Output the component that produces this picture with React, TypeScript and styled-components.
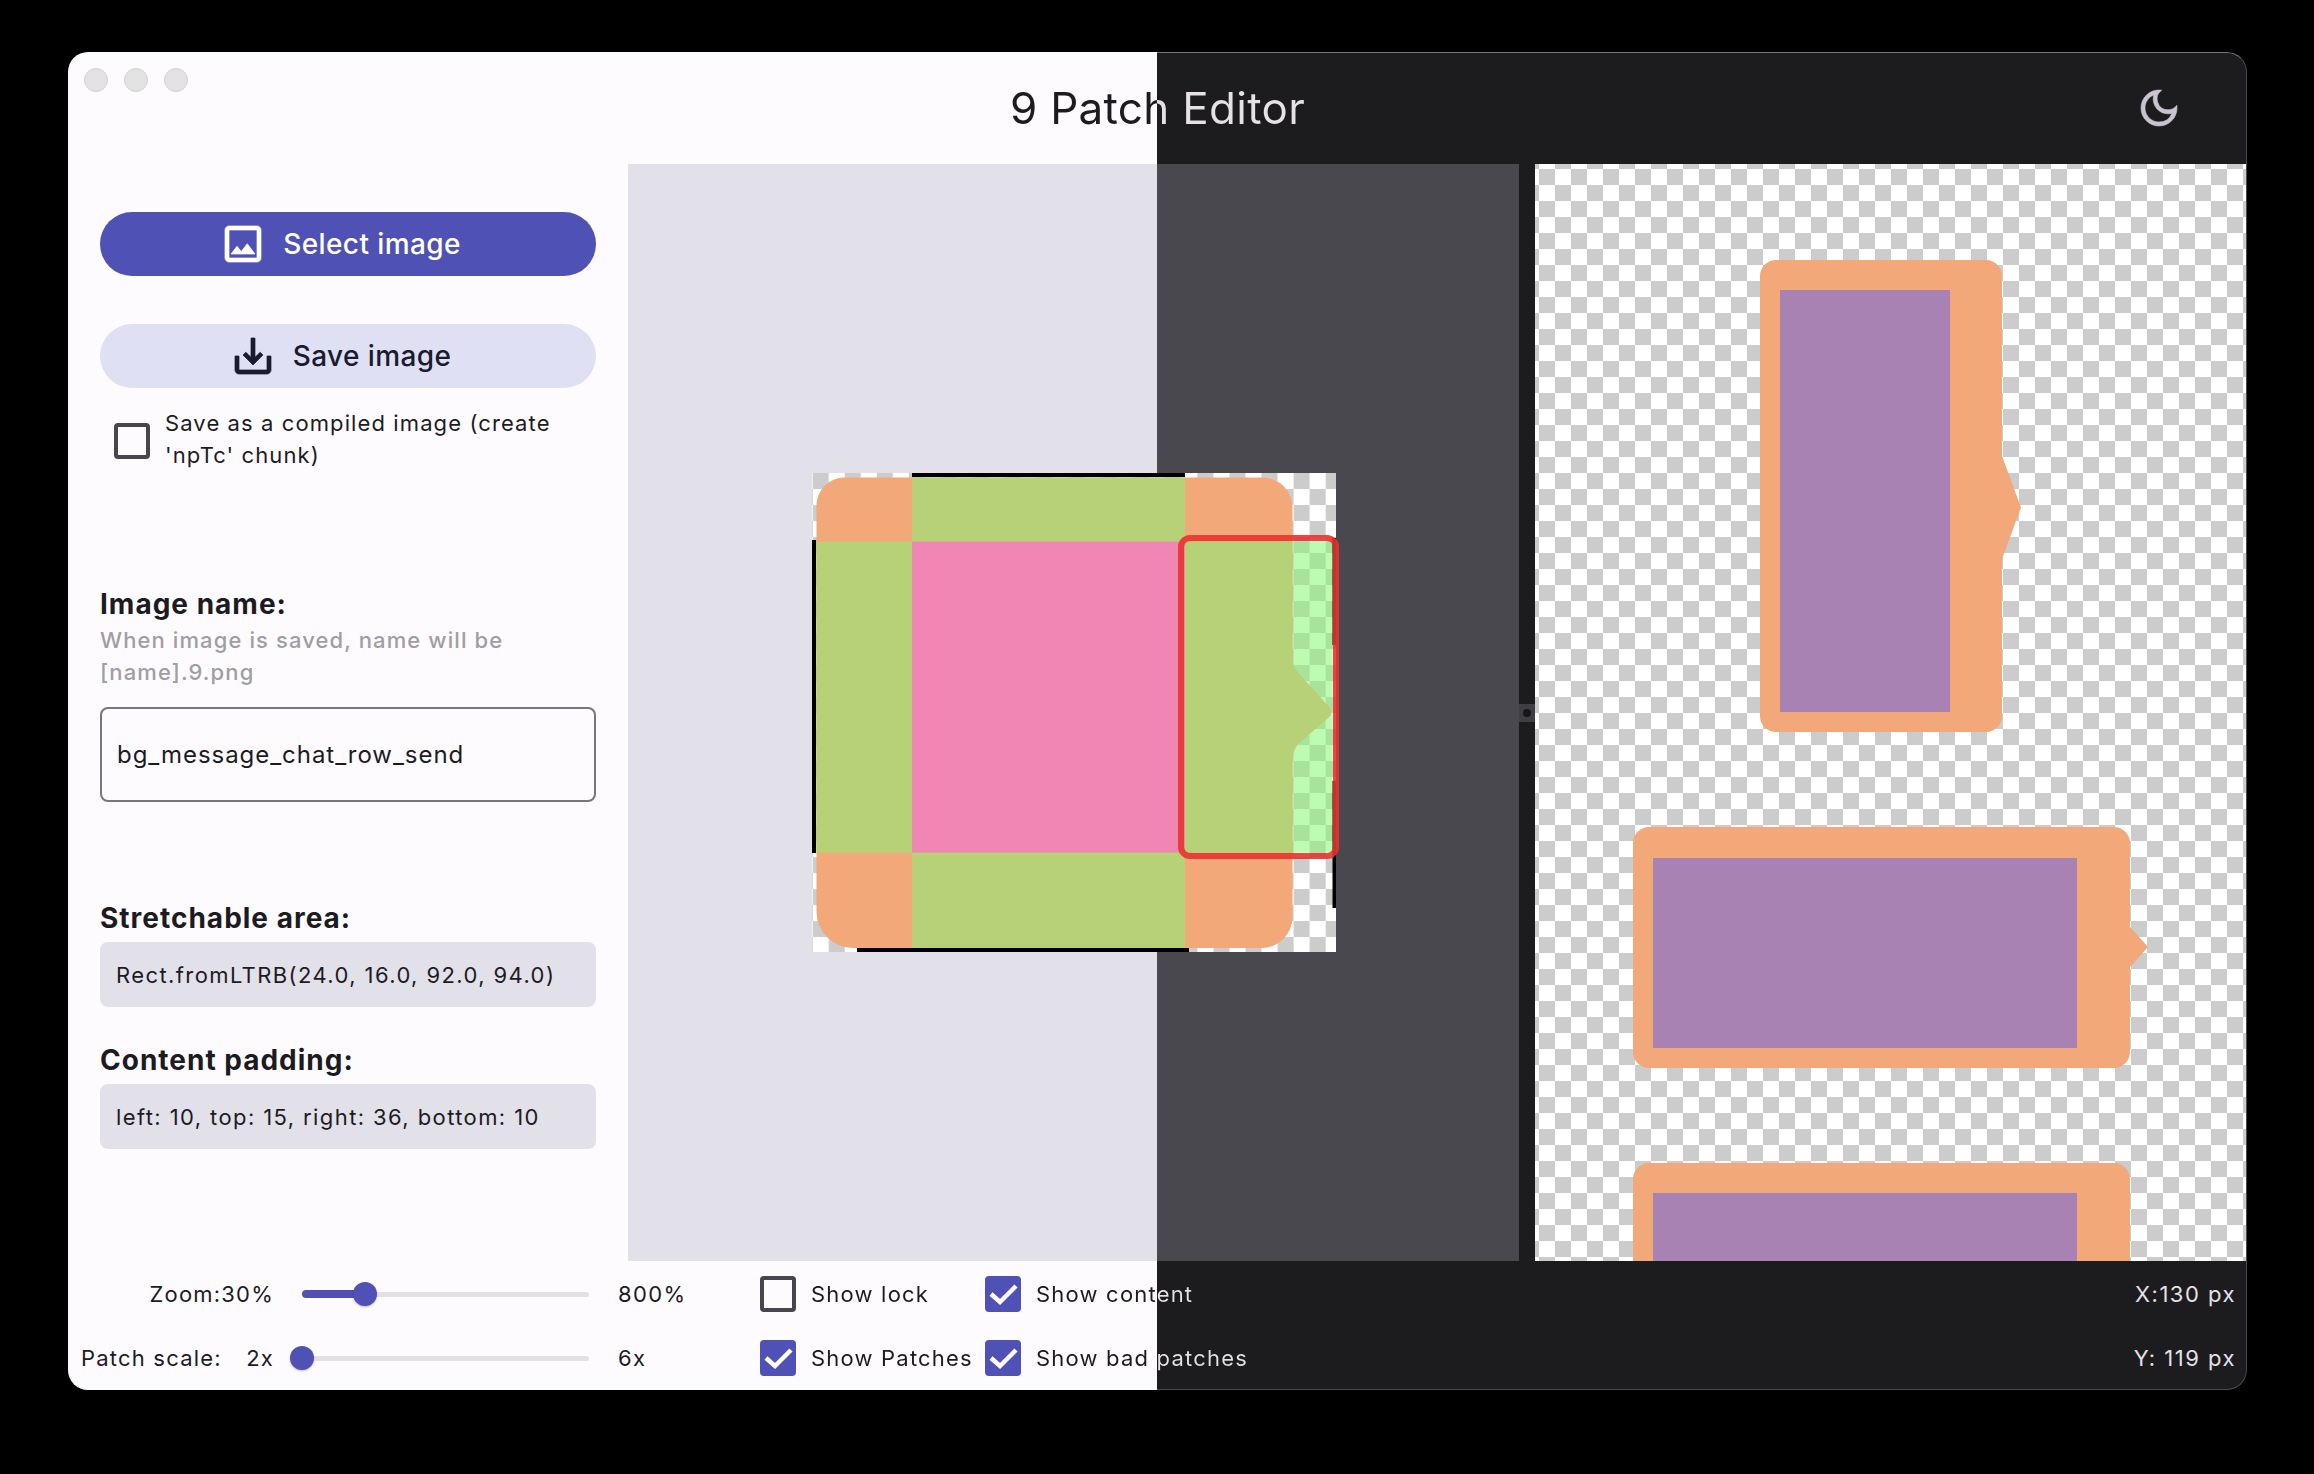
import styled, { createGlobalStyle } from "styled-components";
import { MdOutlineDarkMode, MdOutlineImage, MdOutlineSaveAlt } from "react-icons/md";

const SPLIT_X = 1157;
const LIGHT = "#fefbff";
const DARK = "#1c1c1f";

const GlobalStyle = createGlobalStyle`
    html, body {
        margin: 0;
        background: #000;
        font-family: Inter, "Liberation Sans", sans-serif;
    }
`;

const Stage = styled.div`
    box-sizing: border-box;
    width: 2314px;
    height: 1474px;
    padding: 52px 67px 84px 68px;
`;

const Window = styled.div`
    position: relative;
    display: flex;
    flex-direction: column;
    height: 100%;
    overflow: hidden;
    border-radius: 20px;
    color: #1c1b1f;
    background: linear-gradient(90deg, ${LIGHT} ${SPLIT_X - 68}px, ${DARK} ${SPLIT_X - 68}px);

    &::after {
        content: "";
        position: absolute;
        inset: 0 0 0 ${SPLIT_X - 68}px;
        border: 1px solid #4a494d;
        border-top-color: #77767a;
        border-left: 0;
        border-radius: 0 20px 20px 0;
        pointer-events: none;
    }
`;

// Text crossing the theme reveal line takes its colour from the page position
const SplitText = styled.span`
    background-image: linear-gradient(90deg, #1c1b1f ${SPLIT_X}px, #e6e1e5 ${SPLIT_X}px);
    background-attachment: fixed;
    -webkit-background-clip: text;
    background-clip: text;
    color: transparent;
`;

const Header = styled.header`
    display: grid;
    grid-template-columns: 1fr auto 1fr;
    align-items: center;
    flex: none;
    height: 112px;
`;

const TrafficLights = styled.div`
    display: flex;
    align-self: start;
    gap: 16px;
    padding: 16px 0 0 16px;
`;

const TrafficLight = styled.span`
    box-sizing: border-box;
    width: 24px;
    height: 24px;
    border: 1px solid #d0d0d0;
    border-radius: 50%;
    background: #e3e3e3;
`;

const Title = styled(SplitText)`
    font-size: 44px;
    font-weight: 400;
    line-height: 56px;
    letter-spacing: 0.3px;
`;

const ThemeToggle = styled.div`
    justify-self: end;
    display: flex;
    padding-right: 64px;
    color: #cac4d0;
    font-size: 48px;

    path:not([fill="none"]) {
        stroke: currentColor;
        stroke-width: 0.3;
    }
`;

const Body = styled.div`
    display: flex;
    flex: none;
    height: 1097px;
`;

const Sidebar = styled.aside`
    box-sizing: border-box;
    flex: none;
    width: 560px;
    padding: 48px 32px 0;
`;

const PillButton = styled.div<{ $primary?: boolean }>`
    display: flex;
    align-items: center;
    justify-content: center;
    gap: 16px;
    height: 64px;
    padding-right: 16px;
    border-radius: 32px;
    background: ${({ $primary }) => ($primary ? "#4f51b5" : "#e0e0f5")};
    color: ${({ $primary }) => ($primary ? "#ffffff" : "#1b1b2f")};
    font-size: 28px;
    font-weight: 500;
    letter-spacing: 0.4px;
    margin-bottom: ${({ $primary }) => ($primary ? "48px" : "0")};

    path:not([fill="none"]) {
        stroke: currentColor;
        stroke-width: 0.35;
    }
`;

const CompiledOption = styled.div`
    display: flex;
    align-items: center;
    gap: 15px;
    margin: 21px 0 0 14px;
`;

const Box = styled.span<{ $checked?: boolean }>`
    box-sizing: border-box;
    display: flex;
    flex: none;
    width: 36px;
    height: 36px;
    border: ${({ $checked }) => ($checked ? "0" : "4.5px solid #49454f")};
    border-radius: 4px;
    background: ${({ $checked }) => ($checked ? "#4f51b5" : "transparent")};
`;

const OptionText = styled.div`
    margin-top: -2px;
    padding-bottom: 2px;
    font-size: 22px;
    line-height: 32px;
    letter-spacing: 1.1px;
`;

const SectionTitle = styled.div<{ $top: number }>`
    margin-top: ${({ $top }) => $top}px;
    font-size: 28px;
    font-weight: 700;
    line-height: 36px;
    letter-spacing: 1px;
`;

const Hint = styled.div`
    margin-top: 2px;
    color: #a09da5;
    font-size: 22px;
    font-weight: 500;
    line-height: 32px;
    letter-spacing: 1.1px;
`;

const NameField = styled.div`
    box-sizing: border-box;
    display: flex;
    align-items: center;
    height: 95px;
    margin-top: 19px;
    padding: 0 15px;
    border: 2px solid #79747e;
    border-radius: 8px;
    font-size: 24px;
    letter-spacing: 0.95px;
`;

const ValueBox = styled.div`
    display: flex;
    align-items: center;
    height: 65px;
    margin-top: 6px;
    padding: 0 16px;
    border-radius: 8px;
    background: #e2e1e9;
    font-size: 22px;
    letter-spacing: 1.4px;
`;

const EditorPane = styled.main`
    display: flex;
    align-items: center;
    justify-content: center;
    flex: none;
    width: 891px;
    background: linear-gradient(90deg, #e2e1e9 ${SPLIT_X - 628}px, #49484f ${SPLIT_X - 628}px);
`;

const PatchDrawing = styled.svg`
    overflow: visible;
`;

const Gutter = styled.div`
    display: flex;
    align-items: center;
    flex: none;
    width: 16px;
`;

const GutterHandle = styled.div`
    display: flex;
    align-items: center;
    justify-content: center;
    width: 16px;
    height: 18px;
    background: #3f3e42;
    &::before {
        content: "";
        width: 8px;
        height: 8px;
        border-radius: 50%;
        background: #17171a;
    }
`;

const PreviewPane = styled.section`
    display: flex;
    flex: 1;
    flex-direction: column;
    align-items: center;
    gap: 95px;
    overflow: hidden;
    padding: 96px 1px 0 0;
    background-color: #fff;
    background-image: conic-gradient(#cccccc 25%, #ffffff 0 50%, #cccccc 0 75%, #ffffff 0);
    background-size: 32px 32px;
    background-position: -12px 5px;
`;

const BubbleSvg = styled.svg`
    flex: none;
    display: block;
`;

const Footer = styled.footer`
    flex: 1;
    padding-top: 1px;
`;

const FooterRow = styled.div`
    display: flex;
    align-items: center;
    height: 64px;
    padding-right: 11px;
    font-size: 22px;
    letter-spacing: 1.2px;
    white-space: nowrap;
`;

const SliderLabel = styled.div`
    flex: none;
    width: 206px;
    display: flex;
    justify-content: space-between;
    padding-left: 13px;
    box-sizing: border-box;
`;

const SliderTrack = styled.div`
    position: relative;
    flex: none;
    width: 287px;
    height: 5px;
    margin: 0 29px 0 28px;
    border-radius: 3px;
    background: #e2e1e6;
`;

const SliderFill = styled.div`
    position: absolute;
    left: 0;
    top: -2px;
    height: 8px;
    border-radius: 4px;
    background: #4f51b5;
`;

const SliderThumb = styled.div`
    position: absolute;
    top: -10px;
    width: 24px;
    height: 24px;
    margin-left: -12px;
    border-radius: 50%;
    background: #4f51b5;
    box-shadow: 0 1px 2px rgba(0, 0, 0, 0.25);
`;

const SliderEnd = styled.div`
    flex: none;
    width: 142px;
    letter-spacing: 1.4px;
`;

const CheckOption = styled.div<{ $width: number }>`
    display: flex;
    align-items: center;
    gap: 15px;
    flex: none;
    width: ${({ $width }) => $width}px;
`;

const Coordinate = styled.div`
    margin-left: auto;
    color: #e6e1e5;
    letter-spacing: 1.5px;
`;

const Slider = ({ percent }: { percent: number }) => (
    <SliderTrack>
        <SliderFill style={{ width: `${percent}%` }} />
        <SliderThumb style={{ left: `${percent}%` }} />
    </SliderTrack>
);

const Check = ({ checked, label, width }: { checked?: boolean; label: string; width: number }) => (
    <CheckOption $width={width}>
        <Box $checked={checked}>
            {checked && (
                <svg width="36" height="36" viewBox="0 0 36 36">
                    <path d="M6 18L15 26L31 10" fill="none" stroke="#fff" strokeWidth="4.5" />
                </svg>
            )}
        </Box>
        <SplitText>{label}</SplitText>
    </CheckOption>
);

const Bubble = ({ width, height, inset, tipTop, tipBottom, bodyWidth }: {
    width: number;
    height: number;
    inset: [number, number, number, number];
    tipTop: number;
    tipBottom: number;
    bodyWidth: number;
}) => {
    const r = 16;
    const apex = (tipTop + tipBottom) / 2;
    const corner = `A${r} ${r} 0 0 1`;
    const d = `M${r} 0H${bodyWidth - r}${corner} ${bodyWidth} ${r}V${tipTop}L${width} ${apex}L${bodyWidth} ${tipBottom}V${height - r}${corner} ${bodyWidth - r} ${height}H${r}${corner} 0 ${height - r}V${r}${corner} ${r} 0Z`;
    const [left, top, right, bottom] = inset;
    return (
        <BubbleSvg width={width} height={height} viewBox={`0 0 ${width} ${height}`}>
            <path d={d} fill="#f2a878" />
            <rect x={left} y={top} width={right - left} height={bottom - top} fill="#a882b2" />
        </BubbleSvg>
    );
};

const PatchImage = () => (
    <PatchDrawing width={524} height={479} viewBox="0 0 524 479">
        <defs>
            <pattern id="checker" width="32.06" height="32" x="0.7" patternUnits="userSpaceOnUse">
                <rect width="32.06" height="32" fill="#fff" />
                <rect width="16.03" height="16" fill="#ccc" />
                <rect x="16.03" y="16" width="16.03" height="16" fill="#ccc" />
            </pattern>
            <pattern id="checkerGreen" width="32.06" height="32" x="0.7" patternUnits="userSpaceOnUse">
                <rect width="32.06" height="32" fill="#bdfcb0" />
                <rect width="16.03" height="16" fill="#a9e29b" />
                <rect x="16.03" y="16" width="16.03" height="16" fill="#a9e29b" />
            </pattern>
            <clipPath id="bubbleShape">
                <path d="M32 4.5H450A30 30 0 0 1 480.5 35V188Q480.5 194 486 200L517 234Q521 239 517 244L487 270Q480.5 277 480.5 286V444A31 31 0 0 1 450 475H41A36.5 36.5 0 0 1 4.5 438.5V32A28 28 0 0 1 32 4.5Z" />
            </clipPath>
        </defs>
        <rect width="524" height="479" fill="url(#checker)" />
        <rect x="480.5" y="68.6" width="40" height="311" fill="url(#checkerGreen)" />
        <g clipPath="url(#bubbleShape)">
            <rect width="524" height="479" fill="#f2a878" />
            <rect x="100" width="273" height="479" fill="#b6d176" />
            <rect y="68.6" width="524" height="311" fill="#b6d176" />
            <rect x="100" y="68.6" width="273" height="311" fill="#ef86b4" />
        </g>
        <rect x="100" width="273" height="4" fill="#000" />
        <rect y="67" width="4" height="313" fill="#000" />
        <rect x="45" y="475" width="332" height="4" fill="#000" />
        <rect x="520.5" y="65" width="3.5" height="107" fill="#000" />
        <rect x="520.5" y="308" width="3.5" height="127" fill="#000" />
        <rect x="369" y="65" width="155" height="318" rx="9" fill="none" stroke="#e8332f" strokeOpacity="0.9" strokeWidth="6" />
    </PatchDrawing>
);

export default function App() {
    return (
        <Stage>
            <GlobalStyle />
            <Window>
                <Header>
                    <TrafficLights>
                        <TrafficLight />
                        <TrafficLight />
                        <TrafficLight />
                    </TrafficLights>
                    <Title>9 Patch Editor</Title>
                    <ThemeToggle>
                        <MdOutlineDarkMode />
                    </ThemeToggle>
                </Header>
                <Body>
                    <Sidebar>
                        <PillButton $primary>
                            <MdOutlineImage size={48} />
                            Select image
                        </PillButton>
                        <PillButton>
                            <MdOutlineSaveAlt size={48} />
                            Save image
                        </PillButton>
                        <CompiledOption>
                            <Box />
                            <OptionText>
                                Save as a compiled image (create
                                <br />
                                'npTc' chunk)
                            </OptionText>
                        </CompiledOption>
                        <SectionTitle $top={113}>Image name:</SectionTitle>
                        <Hint>
                            When image is saved, name will be
                            <br />
                            [name].9.png
                        </Hint>
                        <NameField>bg_message_chat_row_send</NameField>
                        <SectionTitle $top={98}>Stretchable area:</SectionTitle>
                        <ValueBox>Rect.fromLTRB(24.0, 16.0, 92.0, 94.0)</ValueBox>
                        <SectionTitle $top={35}>Content padding:</SectionTitle>
                        <ValueBox>left: 10, top: 15, right: 36, bottom: 10</ValueBox>
                    </Sidebar>
                    <EditorPane>
                        <PatchImage />
                    </EditorPane>
                    <Gutter>
                        <GutterHandle />
                    </Gutter>
                    <PreviewPane>
                        <Bubble width={261} height={472} inset={[20, 30, 190, 452]} tipTop={196} tipBottom={299} bodyWidth={242} />
                        <Bubble width={515} height={241} inset={[20, 31, 444, 221]} tipTop={100} tipBottom={140} bodyWidth={497} />
                        <Bubble width={515} height={241} inset={[20, 30, 444, 221]} tipTop={100} tipBottom={140} bodyWidth={497} />
                    </PreviewPane>
                </Body>
                <Footer>
                    <FooterRow>
                        <SliderLabel>
                            <span />
                            <span>Zoom:30%</span>
                        </SliderLabel>
                        <Slider percent={22} />
                        <SliderEnd>800%</SliderEnd>
                        <Check label="Show lock" width={225} />
                        <Check checked label="Show content" width={300} />
                        <Coordinate>X:130 px</Coordinate>
                    </FooterRow>
                    <FooterRow>
                        <SliderLabel>
                            <span>Patch scale:</span>
                            <span>2x</span>
                        </SliderLabel>
                        <Slider percent={0} />
                        <SliderEnd>6x</SliderEnd>
                        <Check checked label="Show Patches" width={225} />
                        <Check checked label="Show bad patches" width={300} />
                        <Coordinate>Y: 119 px</Coordinate>
                    </FooterRow>
                </Footer>
            </Window>
        </Stage>
    );
}
